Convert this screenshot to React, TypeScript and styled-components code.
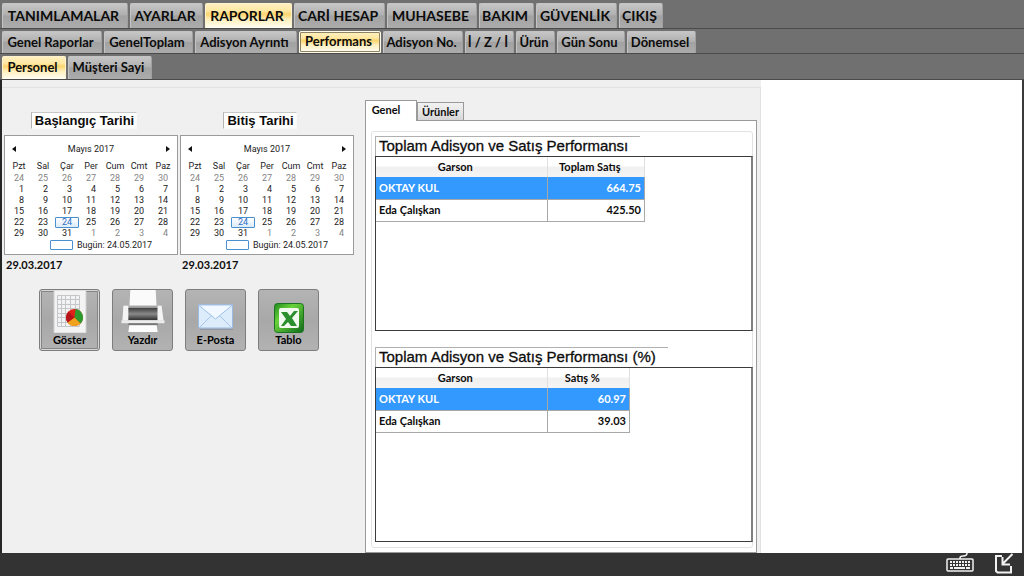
import React from 'react';
import styled, { createGlobalStyle, css } from 'styled-components';

const ui = 'Roboto, "Noto Sans", sans-serif';
const lato = 'Lato, "Open Sans", sans-serif';
const arial = '"Liberation Sans", Arial, sans-serif';

const Global = createGlobalStyle`
  * { box-sizing: border-box; }
  body { margin: 0; background: #333; color: #0c0c0c; font-family: ${lato}; }
  button { font: inherit; color: inherit; padding: 0; margin: 0; border: 0; background: none; white-space: nowrap; }
  table { border-collapse: collapse; }
`;

const Page = styled.div`
  min-height: 100vh;
  display: flex;
  flex-direction: column;
`;

const Bar = styled.nav<{ $top: number; $size: number }>`
  display: flex;
  gap: 2px;
  padding: ${p => p.$top}px 2px 0;
  background: #707070;
  border-bottom: 1px solid #4a4a4a;
  font-size: ${p => p.$size}px;
  font-weight: 700;
`;

const MenuTab = styled.button<{ $w: number; $h: number; $on?: boolean; $framed?: boolean }>`
  width: ${p => p.$w}px;
  height: ${p => p.$h}px;
  padding: 0 3px 2px 0;
  border: 1px solid #c4c4c4;
  border-bottom: 0;
  border-right-color: #a0a0a0;
  border-radius: 2px 2px 0 0;
  background: linear-gradient(#c6c6c6, #b0b0b0 45%, #a2a2a2 50%, #acacac);
  text-align: center;
  ${p => p.$on && css`
    border-color: #fff3cf;
    background: linear-gradient(#fff0c0, #ffe7a0 30%, #fbd46d 42%, #fff0bd 65%, #fffdf4);
  `}
  ${p => p.$framed && css`
    border: 1px solid #fffbe8;
    outline: 1px solid #8d8468;
    outline-offset: -2px;
  `}
`;

const Body = styled.main`
  flex: 1;
  display: grid;
  grid-template-columns: 759px minmax(0, 1fr);
  background: #fff;
  border-left: 2px solid #262626;
  border-right: 2px solid #3a3a3a;
`;

const Work = styled.div`
  display: flex;
  flex-direction: column;
  padding-top: 7px;
  background: #f0f0f0;
`;

const Group = styled.div`
  flex: 1;
  display: grid;
  grid-template-columns: 363px minmax(0, 1fr);
  border-top: 1px solid #e2e2e2;
  border-right: 1px solid #e2e2e2;
  padding-right: 3px;
`;

const Filters = styled.section`
  padding: 24px 0 0 2px;
`;

const Dates = styled.div`
  display: flex;
  gap: 2px;
`;

const DateColumn = styled.div`
  width: 174px;
  display: flex;
  flex-direction: column;
`;

const Caption = styled.h2`
  align-self: center;
  margin: 0 16px 6px 2px;
  height: 17px;
  padding: 0 2px 0 3px;
  border: 1px solid #fafafa;
  border-left-color: #b4b4b4;
  border-top-color: #c8c8c8;
  background: #fff;
  font: 700 13px/16px ${arial};
  white-space: nowrap;
`;

const CalendarBox = styled.div`
  height: 120px;
  padding: 6px 2px 0;
  border: 1px solid #9b9b9b;
  background: #fff;
  font: 400 9px/11px ${ui};
  color: #1c1c1c;
`;

const CalendarHead = styled.div`
  display: flex;
  align-items: center;
  justify-content: space-between;
  height: 14px;
  padding: 0 5px;
`;

const Arrow = styled.button`
  width: 4px;
  height: 8px;
  display: flex;
  align-items: center;
`;

const Days = styled.table`
  width: 168px;
  table-layout: fixed;
  th { height: 17px; padding: 3px 0 0; font-weight: 400; text-align: center; }
  td { height: 11px; padding: 0; }
`;

const Day = styled.button<{ $out?: boolean; $now?: boolean }>`
  display: block;
  width: 24px;
  height: 11px;
  padding-right: 7px;
  line-height: 11px;
  text-align: right;
  color: ${p => (p.$out ? '#858585' : '#1c1c1c')};
  ${p => p.$now && css`
    border: 1px solid #4a90d0;
    border-radius: 1px;
    padding-right: 6px;
    line-height: 9px;
    color: #2f6fc0;
    background: linear-gradient(#fff, #dcebfa);
  `}
`;

const Today = styled.div`
  display: flex;
  align-items: center;
  gap: 4px;
  padding-left: 43px;
  height: 12px;
  white-space: nowrap;
`;

const TodayMark = styled.span`
  width: 23px;
  height: 10px;
  border: 1px solid #4a90d0;
  border-radius: 1px;
`;

const Chosen = styled.p`
  margin: 3px 0 0 2px;
  font: 700 11px/14px ${lato};
`;

const Actions = styled.div`
  display: flex;
  gap: 12px;
  padding: 17px 0 0 35px;
`;

const Action = styled.button<{ $focus?: boolean }>`
  width: 61px;
  height: 62px;
  display: flex;
  flex-direction: column;
  justify-content: flex-end;
  align-items: center;
  padding-bottom: 3px;
  border: 1px solid #7d7d7d;
  border-radius: 3px;
  background: linear-gradient(#b4b4b4, #a8a8a8 50%, #b2b2b2);
  font: 700 11px/14px ${lato};
  color: #000;
  ${p => p.$focus && css`
    box-shadow: inset 0 0 0 1px #d6d6d6, inset 0 0 0 2px #858585;
  `}
`;

const Panel = styled.section`
  display: flex;
  flex-direction: column;
  padding-top: 12px;
`;

const PanelTabs = styled.div`
  display: flex;
  align-items: flex-end;
  font: 700 11px/14px ${lato};
`;

const PanelTab = styled.button<{ $on?: boolean }>`
  width: ${p => (p.$on ? 52 : 47)}px;
  height: ${p => (p.$on ? 21 : 18)}px;
  border: 1px solid #9a9a9a;
  border-bottom: 0;
  background: ${p => (p.$on ? '#fff' : 'linear-gradient(#f2f2f2, #e6e6e6 50%, #d6d6d6)')};
  ${p => p.$on && css`
    margin-bottom: -1px;
    z-index: 1;
    padding: 0 10px 2px 0;
  `}
`;

const PanelBody = styled.div`
  flex: 1;
  display: flex;
  padding: 10px 3px 4px 5px;
  border: 1px solid #9a9a9a;
  background: #fff;
`;

const Frame = styled.div`
  flex: 1;
  display: flex;
  flex-direction: column;
  gap: 16px;
  padding: 4px 0 5px 3px;
  border: 1px solid #e2e2e2;
  border-radius: 3px;
`;

const Report = styled.section`
  flex: 1;
  display: flex;
  flex-direction: column;
  align-items: flex-start;
  margin-right: -1px;
`;

const ReportTitle = styled.h2`
  margin: 0;
  height: 20px;
  padding: 0 12px 0 3px;
  border: 1px solid #b0b0b0;
  border-right: 0;
  border-bottom: 0;
  font: 400 15px/18px ${arial};
  -webkit-text-stroke: 0.3px #0c0c0c;
  white-space: nowrap;
`;

const ReportBox = styled.div`
  flex: 1;
  align-self: stretch;
  border: 1px solid #3c3c3c;
  border-right: 2px solid #808080;
`;

const Data = styled.table<{ $last: number }>`
  width: ${p => 171 + p.$last}px;
  table-layout: fixed;
  font: 700 11px/14px ${lato};
  th {
    height: 20px;
    padding: 0 12px 0 0;
    background: linear-gradient(#fff 45%, #f0f0f0 50%, #f4f4f4);
    border-right: 1px solid #e0e0e0;
  }
  th:first-child { width: 171px; }
  td {
    height: 22px;
    padding: 0 3px;
    border-right: 1px solid #a8a8a8;
    border-bottom: 1px solid #a8a8a8;
  }
  td:last-child { text-align: right; }
`;

const Row = styled.tr<{ $on?: boolean }>`
  ${p => p.$on && css`background: #3399ff; color: #fff;`}
`;

const Footer = styled.footer`
  height: 23px;
  display: flex;
  justify-content: flex-end;
  gap: 20px;
  padding-right: 10px;
  background: #333;
`;

const IconButton = styled.button`
  display: flex;
  align-items: flex-start;
`;

const mainTabs: [string, number][] = [
  ['TANIMLAMALAR', 126], ['AYARLAR', 73], ['RAPORLAR', 87], ['CARİ HESAP', 91],
  ['MUHASEBE', 90], ['BAKIM', 55], ['GÜVENLİK', 81], ['ÇIKIŞ', 44],
];
const subTabs: [string, number][] = [
  ['Genel Raporlar', 100], ['GenelToplam', 89], ['Adisyon Ayrıntı', 102], ['Performans', 82],
  ['Adisyon No.', 80], ['İ / Z / İ', 49], ['Ürün', 39], ['Gün Sonu', 68], ['Dönemsel', 69],
];

const weeks = [0, 1, 2, 3, 4, 5].map(w =>
  [0, 1, 2, 3, 4, 5, 6].map(d => {
    const n = w * 7 + d - 6;
    if (n < 1) return { n: n + 30, out: true };
    if (n > 31) return { n: n - 31, out: true };
    return { n, out: false };
  }),
);

function Calendar({ title }: { title: string }) {
  return (
    <DateColumn>
      <Caption>{title}</Caption>
      <CalendarBox>
        <CalendarHead>
          <Arrow aria-label="Önceki ay">
            <svg width="4" height="6" viewBox="0 0 4 6"><path d="M4 0v6L0 3z" fill="#111" /></svg>
          </Arrow>
          <span>Mayıs 2017</span>
          <Arrow aria-label="Sonraki ay">
            <svg width="4" height="6" viewBox="0 0 4 6"><path d="M0 0v6l4-3z" fill="#111" /></svg>
          </Arrow>
        </CalendarHead>
        <Days>
          <thead>
            <tr>{['Pzt', 'Sal', 'Çar', 'Per', 'Cum', 'Cmt', 'Paz'].map(d => <th key={d}>{d}</th>)}</tr>
          </thead>
          <tbody>
            {weeks.map((week, i) => (
              <tr key={i}>
                {week.map(({ n, out }) => (
                  <td key={n}><Day $out={out} $now={n === 24 && !out}>{n}</Day></td>
                ))}
              </tr>
            ))}
          </tbody>
        </Days>
        <Today><TodayMark />Bugün: 24.05.2017</Today>
      </CalendarBox>
      <Chosen>29.03.2017</Chosen>
    </DateColumn>
  );
}

const ChartIcon = () => (
  <svg width="36" height="43" viewBox="0 0 36 43">
    <path d="M2 0h32v43H2z" fill="#f3f3f3" stroke="#d0d0d0" />
    <path d="M5.500 5.500h22v31h-22zM9.500 5v31M13.500 5v31M18.500 5v31M23.500 5v31M5 9.500h22M5 14.500h22M5 18.500h22M5 23.500h22M5 27.500h22M5 32.500h22" fill="none" stroke="#c4c6ca" />
    <circle cx="22.500" cy="27.500" r="8.500" fill="#e02318" />
    <path d="M22.500 27.500l1-8.500a8.500 8.500 0 0 1 5 14.500z" fill="#2d9a2d" />
    <path d="M22.500 27.500l6 6a8.500 8.500 0 0 1-13-1z" fill="#f0a21e" />
    <path d="M22.500 27.500l-6-6a8.500 8.500 0 0 0-1 11z" fill="#b5151a" />
  </svg>
);

const PrinterIcon = () => (
  <svg width="46" height="44" viewBox="0 0 46 44">
    <defs>
      <linearGradient id="slot" x1="0" y1="0" x2="0" y2="1">
        <stop offset="0" stopColor="#3a3a3a" /><stop offset=".5" stopColor="#8a8a8a" /><stop offset="1" stopColor="#2c2c2c" />
      </linearGradient>
    </defs>
    <path d="M10 0h26l1 19H9z" fill="#fafafa" />
    <path d="M3 16h39l1 16H2z" fill="#cfcfcf" />
    <path d="M7 18h31v13H7z" fill="url(#slot)" />
    <path d="M8 16h30v2H8z" fill="#a4a4a4" />
    <path d="M3 16h5v15H2zM38 16h4l2 15h-6z" fill="#f4f4f4" />
    <path d="M1 31h44v3H1z" fill="#ececec" />
    <path d="M8 34h30v2H8z" fill="#777" />
    <path d="M9 36h28l1 7H8z" fill="#fcfcfc" />
  </svg>
);

const MailIcon = () => (
  <svg width="38" height="31" viewBox="0 0 38 31">
    <path d="M1.500 3h34v23h-34z" fill="#dcecfb" stroke="#9dbbe0" />
    <path d="M2 26l12-12M35 26L23 14" stroke="#a9c6ea" fill="none" />
    <path d="M1.500 3l17 14 17-14z" fill="#f1f8ff" stroke="#9fc0e8" />
    <path d="M3 27.500h33" stroke="#8c96a4" />
  </svg>
);

const ExcelIcon = () => (
  <svg width="32" height="31" viewBox="0 0 32 31">
    <defs>
      <linearGradient id="green" x1="0" y1="0" x2="1" y2="1">
        <stop offset="0" stopColor="#1f8a1f" /><stop offset=".35" stopColor="#6ad23a" /><stop offset="1" stopColor="#0f6a1a" />
      </linearGradient>
    </defs>
    <rect x="1.500" y="1.500" width="29" height="29" rx="3" fill="url(#green)" stroke="#1b7420" />
    <rect x="6" y="6" width="20" height="20" rx="2" fill="#f2faef" />
    <path d="M8 10h6l3 4 4-5h4l-6 7 5 8h-6l-3-4-4 4H8l5-7z" fill="#2a8f2c" />
  </svg>
);

const KeyboardIcon = () => (
  <svg width="28" height="19" viewBox="0 0 28 19" fill="none" stroke="#f2f2f2">
    <path d="M14 6V5q0-2 3-2 4 0 4-3" strokeWidth="1.500" />
    <rect x="1" y="6" width="26" height="12" rx="1" strokeWidth="1.500" />
    <path d="M4 9h21M4 12h21" strokeWidth="2" strokeDasharray="2 1" />
    <path d="M4 15h3M8 15h11M20 15h4" strokeWidth="2" />
  </svg>
);

const ExitIcon = () => (
  <svg width="20" height="21" viewBox="0 0 20 21" fill="none" stroke="#f2f2f2" strokeWidth="2">
    <path d="M8 3H2v15l1.500 1.500H17V13" />
    <path d="M18.500 1L9 10.500M8.500 4v7.500H16" />
  </svg>
);

function ReportTable({ title, column, last, rows }: { title: string; column: string; last: number; rows: [string, string][] }) {
  return (
    <Report>
      <ReportTitle>{title}</ReportTitle>
      <ReportBox>
        <Data $last={last}>
          <thead><tr><th>Garson</th><th>{column}</th></tr></thead>
          <tbody>
            {rows.map(([name, value], i) => (
              <Row key={name} $on={i === 0}><td>{name}</td><td>{value}</td></Row>
            ))}
          </tbody>
        </Data>
      </ReportBox>
    </Report>
  );
}

export default function App() {
  return (
    <Page>
      <Global />
      <Bar $top={3} $size={14}>
        {mainTabs.map(([t, w]) => <MenuTab key={t} $w={w} $h={25} $on={t === 'RAPORLAR'}>{t}</MenuTab>)}
      </Bar>
      <Bar $top={2} $size={13}>
        {subTabs.map(([t, w]) => (
          <MenuTab key={t} $w={w} $h={22} $on={t === 'Performans'} $framed={t === 'Performans'}>{t}</MenuTab>
        ))}
      </Bar>
      <Bar $top={2} $size={13}>
        <MenuTab $w={64} $h={23} $on>Personel</MenuTab>
        <MenuTab $w={84} $h={23}>Müşteri Sayi</MenuTab>
      </Bar>
      <Body>
        <Work>
          <Group>
            <Filters>
              <Dates>
                <Calendar title="Başlangıç Tarihi" />
                <Calendar title="Bitiş Tarihi" />
              </Dates>
              <Actions>
                <Action $focus><ChartIcon />Göster</Action>
                <Action><PrinterIcon />Yazdır</Action>
                <Action><MailIcon />E-Posta</Action>
                <Action><ExcelIcon />Tablo</Action>
              </Actions>
            </Filters>
            <Panel>
              <PanelTabs>
                <PanelTab $on>Genel</PanelTab>
                <PanelTab>Ürünler</PanelTab>
              </PanelTabs>
              <PanelBody>
                <Frame>
                  <ReportTable
                    title="Toplam Adisyon ve Satış Performansı"
                    column="Toplam Satış"
                    last={98}
                    rows={[['OKTAY KUL', '664.75'], ['Eda Çalışkan', '425.50']]}
                  />
                  <ReportTable
                    title="Toplam Adisyon ve Satış Performansı (%)"
                    column="Satış %"
                    last={83}
                    rows={[['OKTAY KUL', '60.97'], ['Eda Çalışkan', '39.03']]}
                  />
                </Frame>
              </PanelBody>
            </Panel>
          </Group>
        </Work>
      </Body>
      <Footer>
        <IconButton aria-label="Klavye"><KeyboardIcon /></IconButton>
        <IconButton aria-label="Küçült"><ExitIcon /></IconButton>
      </Footer>
    </Page>
  );
}
